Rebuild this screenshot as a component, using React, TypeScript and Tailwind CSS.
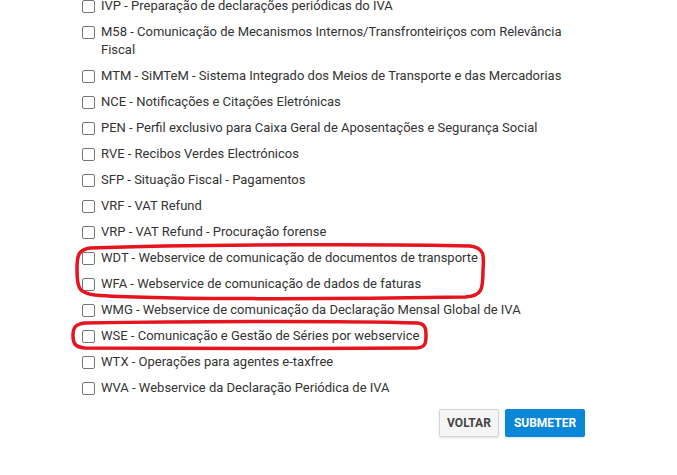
const items: string[][] = [
  ["IVP - Preparação de declarações periódicas do IVA"],
  ["M58 - Comunicação de Mecanismos Internos/Transfronteiriços com Relevância", "Fiscal"],
  ["MTM - SiMTeM - Sistema Integrado dos Meios de Transporte e das Mercadorias"],
  ["NCE - Notificações e Citações Eletrónicas"],
  ["PEN - Perfil exclusivo para Caixa Geral de Aposentações e Segurança Social"],
  ["RVE - Recibos Verdes Electrónicos"],
  ["SFP - Situação Fiscal - Pagamentos"],
  ["VRF - VAT Refund"],
  ["VRP - VAT Refund - Procuração forense"],
  ["WDT - Webservice de comunicação de documentos de transporte"],
  ["WFA - Webservice de comunicação de dados de faturas"],
  ["WMG - Webservice de comunicação da Declaração Mensal Global de IVA"],
  ["WSE - Comunicação e Gestão de Séries por webservice"],
  ["WTX - Operações para agentes e-taxfree"],
  ["WVA - Webservice da Declaração Periódica de IVA"],
];

export default function App() {
  return (
    <div className="relative w-[677px] h-[475px] overflow-hidden bg-white font-['Roboto',sans-serif] text-[13px] leading-[18px] text-[#333]">
      <div className="ml-[82px] w-[503px] -mt-[3px]">
        <ul className="flex flex-col gap-2">
          {items.map((lines) => (
            <li key={lines[0]} className="flex items-start gap-[6px]">
              <span className="mt-[3px] h-[13px] w-[13px] shrink-0 rounded-[2px] border border-[#767676] bg-white" />
              <span>
                {lines.map((l) => (
                  <span key={l} className="block">{l}</span>
                ))}
              </span>
            </li>
          ))}
        </ul>
        <div className="mt-3 flex justify-end gap-[6px]">
          <button className="h-7 w-[60px] rounded-[2px] border border-[#d5d5d5] bg-[#f5f5f5] text-[12px] font-bold text-[#444] shadow-sm">
            VOLTAR
          </button>
          <button className="h-7 w-[80px] rounded-[2px] bg-[#0b87d9] text-[12px] font-bold text-white shadow-sm">
            SUBMETER
          </button>
        </div>
      </div>
      <svg className="pointer-events-none absolute left-0 top-0" width="677" height="475" fill="none">
        <path
          d="M 90 248 C 200 244, 400 244, 470 246 C 485 248, 484 256, 483 270 C 483 290, 482 296, 465 297 C 350 299, 150 300, 95 295 C 80 293, 77 290, 77 270 C 77 255, 78 250, 90 248 Z"
          stroke="#e5141d"
          strokeWidth="3.5"
        />
        <path
          d="M 85 323 C 200 321, 350 321, 418 323 C 426 324, 426 330, 426 336 C 426 344, 425 348, 415 348 C 300 349, 150 349, 85 348 C 75 347, 73 344, 73 335 C 73 327, 76 324, 85 323 Z"
          stroke="#e5141d"
          strokeWidth="3.5"
        />
      </svg>
    </div>
  );
}
